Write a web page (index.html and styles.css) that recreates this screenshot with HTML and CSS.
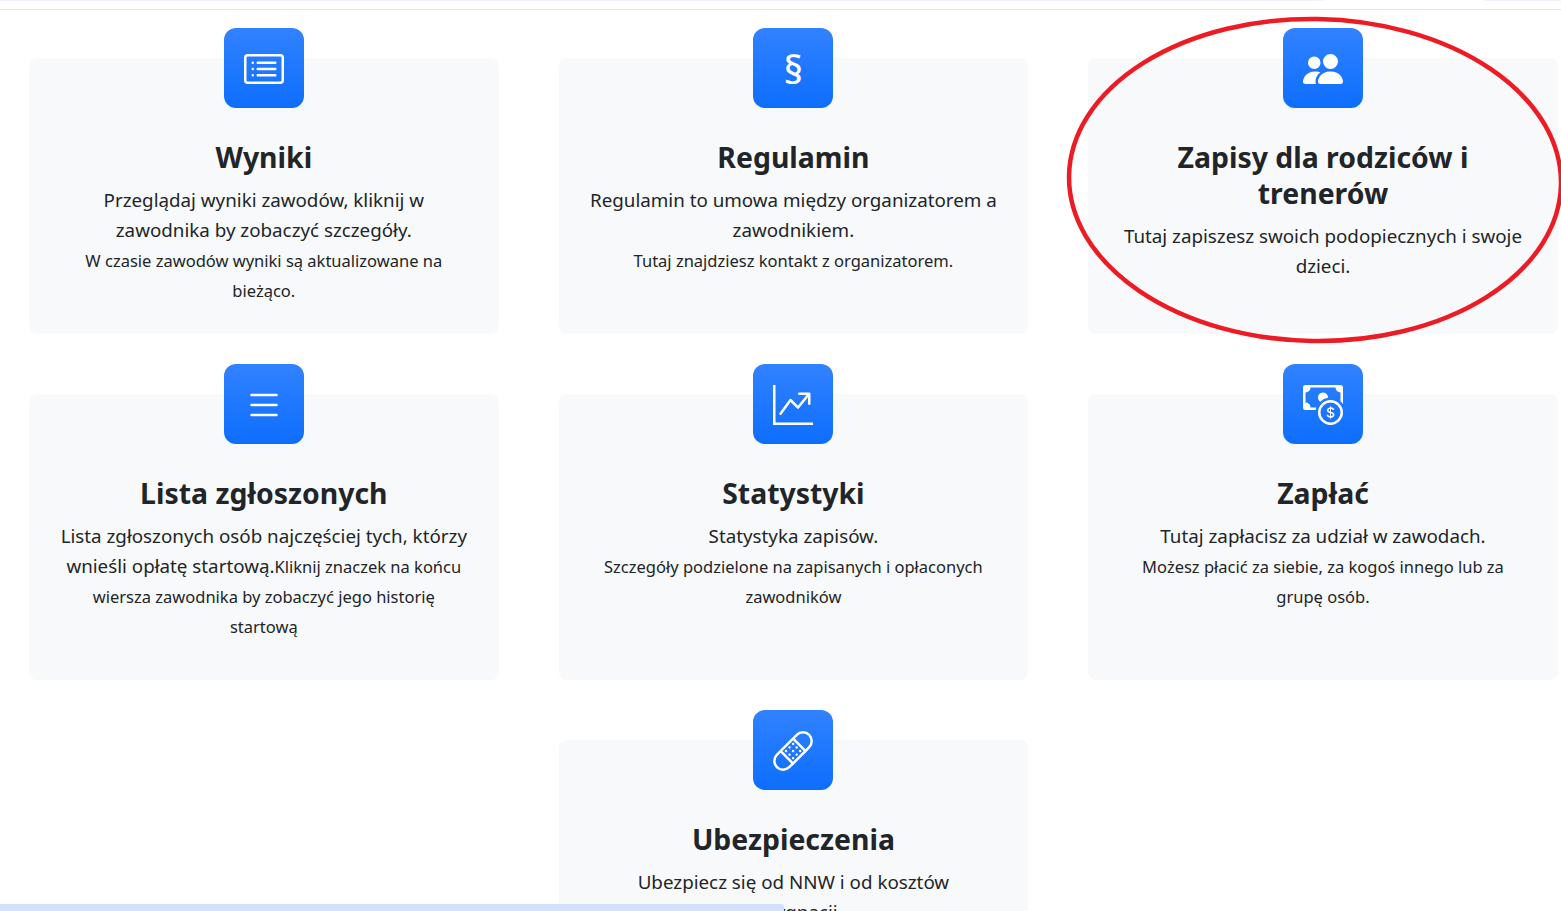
FILE: index.html
```html
<!DOCTYPE html>
<html lang="pl">
<head>
    <meta charset="utf-8">
    <title>Zawody</title>
    <link rel="stylesheet" href="styles.css">
</head>
<body>
    <div class="topbar">
        <div class="pill pill-left"></div>
        <div class="pill pill-right"></div>
    </div>

    <div class="cards">
        <div class="card row-one">
            <div class="icon">
                <svg viewBox="0 0 16 16"><path d="M14.5 3a.5.5 0 0 1 .5.5v9a.5.5 0 0 1-.5.5h-13a.5.5 0 0 1-.5-.5v-9a.5.5 0 0 1 .5-.5h13zm-13-1A1.5 1.5 0 0 0 0 3.5v9A1.5 1.5 0 0 0 1.5 14h13a1.5 1.5 0 0 0 1.5-1.5v-9A1.5 1.5 0 0 0 14.5 2h-13z"/><path d="M5 8a.5.5 0 0 1 .5-.5h7a.5.5 0 0 1 0 1h-7A.5.5 0 0 1 5 8zm0-2.5a.5.5 0 0 1 .5-.5h7a.5.5 0 0 1 0 1h-7a.5.5 0 0 1-.5-.5zm0 5a.5.5 0 0 1 .5-.5h7a.5.5 0 0 1 0 1h-7a.5.5 0 0 1-.5-.5zm-1-5a.5.5 0 1 1-1 0 .5.5 0 0 1 1 0zM4 8a.5.5 0 1 1-1 0 .5.5 0 0 1 1 0zm0 2.5a.5.5 0 1 1-1 0 .5.5 0 0 1 1 0z"/></svg>
            </div>
            <h3>Wyniki</h3>
            <p>Przeglądaj wyniki zawodów, kliknij w<br>zawodnika by zobaczyć szczegóły.<br><small>W czasie zawodów wyniki są aktualizowane na bieżąco.</small></p>
        </div>

        <div class="card row-one">
            <div class="icon"><span class="paragraf">§</span></div>
            <h3>Regulamin</h3>
            <p>Regulamin to umowa między organizatorem a zawodnikiem.<br><small>Tutaj znajdziesz kontakt z organizatorem.</small></p>
        </div>

        <div class="card row-one">
            <div class="icon">
                <svg viewBox="0 0 16 16"><path d="M7 14s-1 0-1-1 1-4 5-4 5 3 5 4-1 1-1 1H7Zm4-6a3 3 0 1 0 0-6 3 3 0 0 0 0 6Zm-5.784 6A2.238 2.238 0 0 1 5 13c0-1.355.68-2.75 1.936-3.72A6.325 6.325 0 0 0 5 9c-4 0-5 3-5 4s1 1 1 1h4.216ZM4.5 8a2.5 2.5 0 1 0 0-5 2.5 2.5 0 0 0 0 5Z"/></svg>
            </div>
            <h3>Zapisy dla rodziców i trenerów</h3>
            <p>Tutaj zapiszesz swoich podopiecznych i swoje dzieci.</p>
        </div>

        <div class="card row-two">
            <div class="icon">
                <svg viewBox="0 0 16 16"><path fill-rule="evenodd" d="M2.5 12a.5.5 0 0 1 .5-.5h10a.5.5 0 0 1 0 1H3a.5.5 0 0 1-.5-.5zm0-4a.5.5 0 0 1 .5-.5h10a.5.5 0 0 1 0 1H3a.5.5 0 0 1-.5-.5zm0-4a.5.5 0 0 1 .5-.5h10a.5.5 0 0 1 0 1H3a.5.5 0 0 1-.5-.5z"/></svg>
            </div>
            <h3>Lista zgłoszonych</h3>
            <p>Lista zgłoszonych osób najczęściej tych, którzy wnieśli opłatę startową.<small>Kliknij znaczek na końcu<br>wiersza zawodnika by zobaczyć jego historię<br>startową</small></p>
        </div>

        <div class="card row-two">
            <div class="icon">
                <svg viewBox="0 0 16 16"><path fill-rule="evenodd" d="M0 0h1v15h15v1H0V0Zm10 3.5a.5.5 0 0 1 .5-.5h4a.5.5 0 0 1 .5.5v4a.5.5 0 0 1-1 0V4.9l-3.613 4.417a.5.5 0 0 1-.74.037L7.06 6.767l-3.656 5.027a.5.5 0 0 1-.808-.588l4-5.5a.5.5 0 0 1 .758-.06l2.609 2.61L13.445 4H10.5a.5.5 0 0 1-.5-.5Z"/></svg>
            </div>
            <h3>Statystyki</h3>
            <p>Statystyka zapisów.<br><small>Szczegóły podzielone na zapisanych i opłaconych zawodników</small></p>
        </div>

        <div class="card row-two">
            <div class="icon">
                <svg viewBox="0 0 16 16"><path fill-rule="evenodd" d="M11 15a4 4 0 1 0 0-8 4 4 0 0 0 0 8zm5-4a5 5 0 1 1-10 0 5 5 0 0 1 10 0z"/><path d="M9.438 11.944c.047.596.518 1.06 1.363 1.116v.44h.375v-.443c.875-.061 1.386-.529 1.386-1.207 0-.618-.39-.936-1.09-1.1l-.296-.07v-1.2c.376.043.614.248.671.532h.658c-.047-.575-.54-1.024-1.329-1.073V8.5h-.375v.45c-.747.073-1.255.522-1.255 1.158 0 .562.378.92 1.007 1.066l.248.061v1.272c-.384-.058-.639-.27-.696-.563h-.668zm1.36-1.354c-.369-.085-.569-.26-.569-.522 0-.294.216-.514.572-.578v1.1h-.003zm.432.746c.449.104.655.272.655.569 0 .339-.257.571-.709.614v-1.195l.054.012z"/><path d="M1 0a1 1 0 0 0-1 1v8a1 1 0 0 0 1 1h4.083c.058-.344.145-.678.258-1H3a2 2 0 0 0-2-2V3a2 2 0 0 0 2-2h10a2 2 0 0 0 2 2v3.528c.38.34.717.728 1 1.154V1a1 1 0 0 0-1-1H1z"/><path d="M9.998 5.083 10 5a2 2 0 1 0-3.132 1.65 5.982 5.982 0 0 1 3.13-1.567z"/></svg>
            </div>
            <h3>Zapłać</h3>
            <p>Tutaj zapłacisz za udział w zawodach.<br><small>Możesz płacić za siebie, za kogoś innego lub za<br>grupę osób.</small></p>
        </div>

        <div class="card card-middle">
            <div class="icon">
                <svg viewBox="0 0 16 16"><path d="M14.121 1.879a3 3 0 0 0-4.242 0L8.733 3.026l4.261 4.26 1.127-1.165a3 3 0 0 0 0-4.242ZM12.293 8 8.027 3.734 3.738 8.031 8 12.293 12.293 8Zm-5.006 4.994L3.03 8.737 1.879 9.88a3 3 0 0 0 4.241 4.243l.006-.006 1.16-1.121ZM2.679 7.676l6.492-6.504a4 4 0 0 1 5.66 5.653l-1.477 1.529-5.006 5.006-1.523 1.472a4 4 0 0 1-5.653-5.66l.001-.002 1.505-1.492.001-.002Z"/><path d="M5.56 7.646a.5.5 0 1 1-.706.708.5.5 0 0 1 .707-.708Zm1.415-1.414a.5.5 0 1 1-.707.707.5.5 0 0 1 .707-.707ZM8.39 4.818a.5.5 0 1 1-.708.707.5.5 0 0 1 .707-.707Zm0 5.657a.5.5 0 1 1-.708.707.5.5 0 0 1 .707-.707ZM9.803 9.06a.5.5 0 1 1-.707.708.5.5 0 0 1 .707-.707Zm1.414-1.414a.5.5 0 1 1-.706.708.5.5 0 0 1 .707-.708ZM6.975 9.06a.5.5 0 1 1-.707.708.5.5 0 0 1 .707-.707ZM8.39 7.646a.5.5 0 1 1-.708.708.5.5 0 0 1 .707-.708Zm1.413-1.414a.5.5 0 1 1-.707.707.5.5 0 0 1 .707-.707Z"/></svg>
            </div>
            <h3>Ubezpieczenia</h3>
            <p>Ubezpiecz się od NNW i od kosztów<br>rezygnacji</p>
        </div>
    </div>

    <svg class="circle" viewBox="0 0 500 330">
        <ellipse cx="251" cy="164" rx="246" ry="161" transform="rotate(1 251 164)"/>
    </svg>

    <div class="scrollbar"></div>
</body>
</html>
```

FILE: styles.css
```css
html, body {
    margin: 0;
    height: 911px;
    overflow: hidden;
}
body {
    position: relative;
    font-family: "Noto Sans", "Open Sans", Arial, sans-serif;
    color: #212529;
    background: #fff;
}
.topbar {
    height: 9px;
    border-bottom: 1px solid #e3e3e3;
    position: relative;
}
.pill {
    position: absolute;
    top: 0;
    height: 1px;
    background: #eef3fb;
}
.pill-left {
    left: 0;
    width: 1323px;
}
.pill-right {
    left: 1485px;
    right: 0;
}
.cards {
    display: grid;
    grid-template-columns: repeat(3, 469.6px);
    column-gap: 60px;
    row-gap: 60px;
    padding: 48px 0 0 29px;
}
.card {
    background: #f8f9fa;
    border-radius: 8px;
    text-align: center;
    padding: 0 24px 30px;
    box-sizing: border-box;
}
.row-one {
    height: 276px;
}
.row-two {
    height: 286px;
}
.card-middle {
    grid-column: 2;
    height: 300px;
}
.icon {
    width: 80px;
    height: 80px;
    margin: -30px auto 31px;
    padding-top: 1px;
    box-sizing: border-box;
    border-radius: 12px;
    background: linear-gradient(180deg, #3182ff, #0d6efd);
    color: #fff;
    display: flex;
    align-items: center;
    justify-content: center;
}
.icon svg {
    width: 40px;
    height: 40px;
    fill: currentColor;
}
.paragraf {
    font-size: 38px;
    font-weight: 500;
    line-height: 1;
}
h3 {
    margin: 0 0 10px;
    font-size: 28.4px;
    line-height: 36px;
    font-weight: 700;
}
p {
    margin: 0;
    font-size: 18.8px;
    line-height: 30px;
}
small {
    font-size: 16.5px;
    line-height: 1;
}
.circle {
    position: absolute;
    left: 1064px;
    top: 16px;
    width: 500px;
    height: 330px;
    fill: none;
    stroke: #ed1c24;
    stroke-width: 4.5;
    overflow: visible;
}
.scrollbar {
    position: absolute;
    left: 0;
    bottom: 0;
    width: 784px;
    height: 7px;
    background: #d3e2fa;
    border-radius: 0 3px 0 0;
}
```
